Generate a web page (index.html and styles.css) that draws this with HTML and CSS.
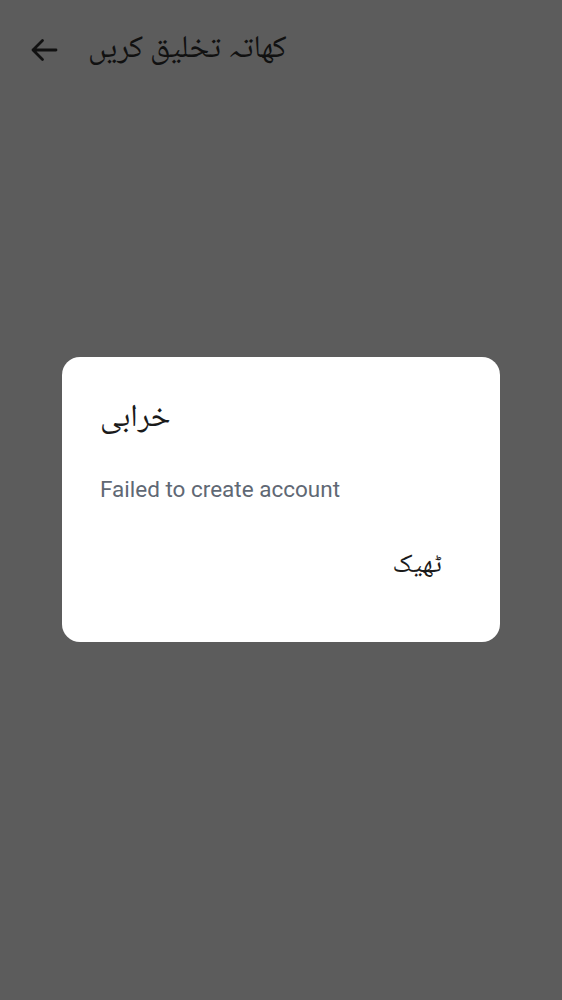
FILE: index.html
```html
<!DOCTYPE html>
<html lang="ur">
<head>
<meta charset="utf-8">
<link rel="stylesheet" href="styles.css">
</head>
<body>
<div class="screen">
  <header class="topbar">
    <svg class="back" width="28" height="24" viewBox="0 0 28 24" aria-hidden="true">
      <path d="M26 12H3 M12.5 2.5L3 12L12.5 21.5" fill="none" stroke="#111" stroke-width="2.8" stroke-linecap="round" stroke-linejoin="round"/>
    </svg>
    <h1 class="title" dir="rtl">کھاتہ تخلیق کریں</h1>
  </header>
  <div class="center">
    <div class="dialog">
      <h2 class="dtitle" dir="rtl">خرابی</h2>
      <p class="dbody">Failed to create account</p>
      <div class="actions">
        <button class="btn" dir="rtl">ٹھیک</button>
      </div>
    </div>
  </div>
</div>
</body>
</html>
```
FILE: styles.css
```css
html, body {
  margin: 0;
  padding: 0;
  background: #5c5c5c;
}
body {
  font-family: "Roboto", "DejaVu Sans", sans-serif;
}
.screen {
  width: 562px;
  height: 1000px;
  display: flex;
  flex-direction: column;
}
.topbar {
  height: 96px;
  display: flex;
  align-items: center;
  padding: 4px 0 0 30px;
  gap: 30px;
  box-sizing: border-box;
}
.back {
  display: block;
  flex: none;
}
.title {
  margin: 0;
  font-family: "Noto Naskh Arabic", "Noto Sans Arabic", "DejaVu Sans", sans-serif;
  font-weight: normal;
  font-size: 31.5px;
  line-height: 48px;
  color: #111;
}
.center {
  padding-top: 261px;
  display: flex;
  justify-content: center;
}
.dialog {
  width: 438px;
  height: 285px;
  box-sizing: border-box;
  background: #fff;
  border-radius: 18px;
  padding: 38px 38px 0 38px;
}
.dtitle {
  margin: 0;
  text-align: left;
  font-family: "Noto Naskh Arabic", "Noto Sans Arabic", "DejaVu Sans", sans-serif;
  font-weight: normal;
  font-size: 31.5px;
  color: #1a1a1a;
  line-height: 48px;
}
.dbody {
  margin: 33px 0 0 0;
  font-size: 22.5px;
  color: #606874;
  line-height: 26px;
}
.actions {
  display: flex;
  justify-content: flex-end;
  margin-top: 45px;
  padding-right: 20px;
}
.btn {
  border: 0;
  background: none;
  padding: 0;
  font-family: "Noto Naskh Arabic", "Noto Sans Arabic", "DejaVu Sans", sans-serif;
  font-size: 26.6px;
  color: #1a1a1a;
  line-height: 40px;
}
```
